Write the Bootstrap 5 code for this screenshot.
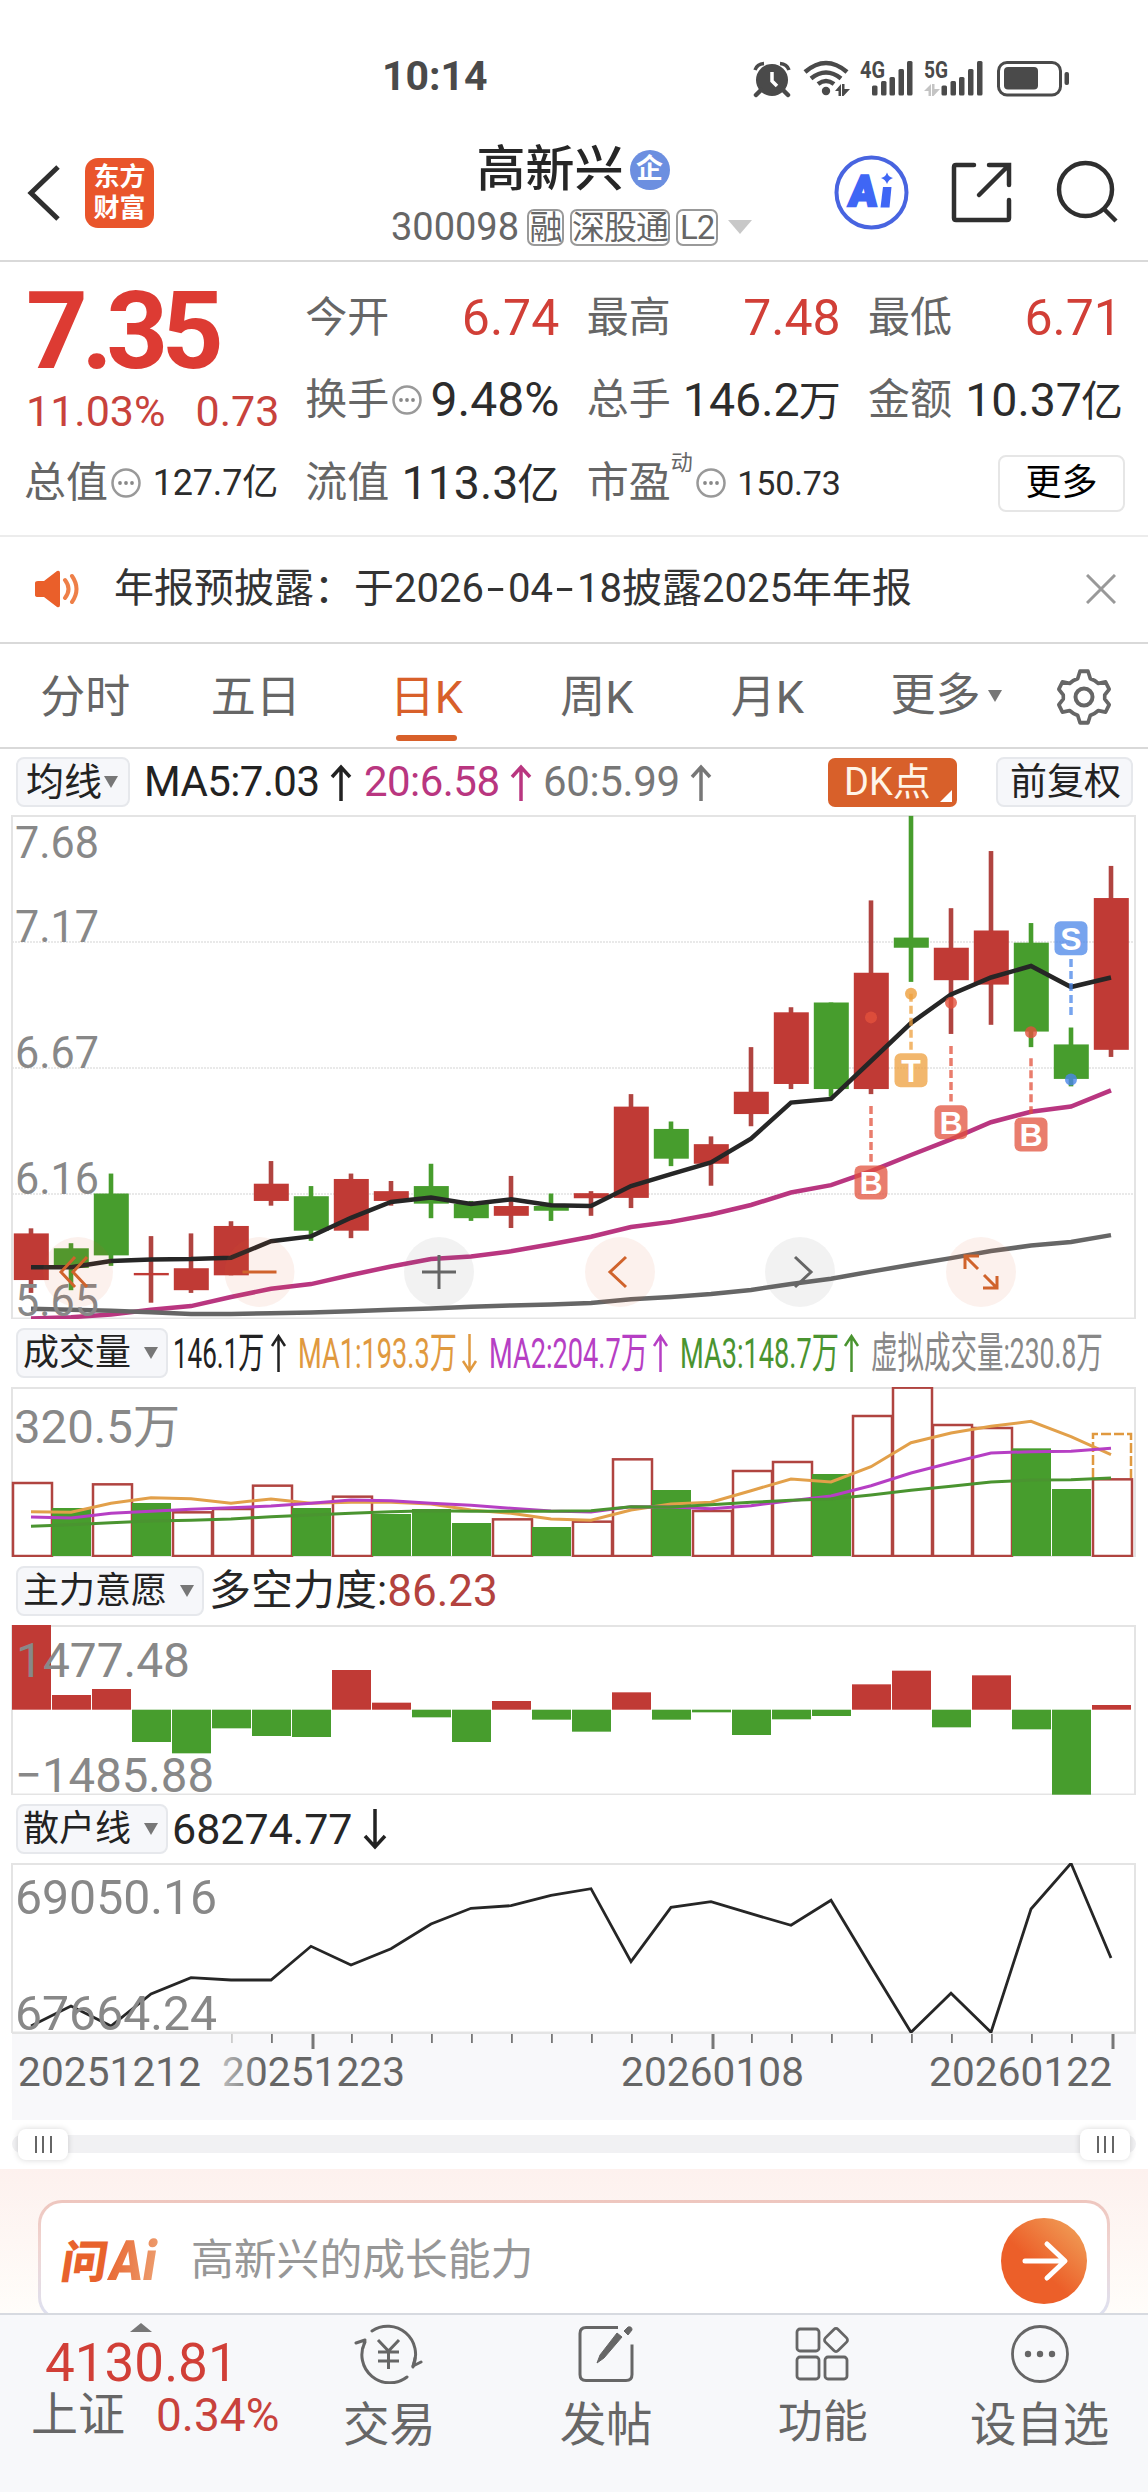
<!DOCTYPE html>
<html lang="zh-CN">
<head>
<meta charset="utf-8">
<meta name="viewport" content="width=device-width, initial-scale=1">
<title>高新兴 300098</title>
<link href="https://cdn.jsdelivr.net/npm/bootstrap@5.3.0/dist/css/bootstrap.min.css" rel="stylesheet">
<style>
:root{--up:#c03a35;--rise:#d13f37;--dn:#479d2d;--ink:#262626;--mid:#666;--org:#d8602a}
body{font-family:Roboto,"Noto Sans CJK SC",sans-serif;color:var(--ink);background:#fff;width:1148px;line-height:1;overflow-x:hidden}
svg{display:block;flex:none}
svg text{font-family:Roboto,"Noto Sans CJK SC",sans-serif}
.nw{white-space:nowrap}
.statusbar{height:98px;padding:55px 81px 0 382px;color:#4a4a4a}
.clock{font-size:41px;font-weight:700;line-height:43px}
.topbar{height:164px;border-bottom:2px solid #d9d9d9;padding:0 29px 0 27px}
.applogo{width:69px;height:70px;border-radius:13px;background:#e9552b;color:#fff;font-size:26px;font-weight:700;line-height:31px;margin-left:25px;padding-top:4px;text-align:center}
.stockname{font-size:49px;line-height:50px;font-weight:500}
.corp{width:40px;height:40px;border-radius:50%;background:#6c8fe0;color:#fff;font-size:27px;font-weight:700;line-height:39px;text-align:center;margin-left:6px}
.code{font-size:38px;color:var(--mid)}
.chip{border:2px solid #999;border-radius:7px;font-size:33px;height:37px;line-height:34px;color:var(--mid);letter-spacing:-1px;text-align:center;white-space:nowrap;display:flex;justify-content:center}
.quotes{display:grid;grid-template-columns:repeat(4,254px);grid-template-rows:82px 82px 84px;justify-content:space-between;padding:15px 26px 10px 24px;height:275px;border-bottom:2px solid #ececec}
.quotes>div{white-space:nowrap}
.pricebox{grid-row:1/3;padding:9px 0 0 2px}
.bigprice{font-size:108px;font-weight:700;color:#dd3b33;letter-spacing:-6.5px;line-height:90px}
.qk{font-size:42px;color:var(--mid)}
.qv{font-size:46.5px;color:#2c2c2c}
.qv.px{font-size:50px;color:var(--rise)}
.qv.sm{font-size:34px;letter-spacing:-.2px}
.qv .cj{font-size:42px;margin-left:-1px}
.dyn{font-size:22px;color:var(--mid);align-self:flex-start;margin-top:11px}
.morebtn{width:127px;height:57px;border:2px solid #e6e6e6;border-radius:8px;font-size:36px;line-height:53px;text-align:center;background:#fff}
.notice{height:107px;border-bottom:2px solid #d9d9d9;padding:0 32px 2px 34px;font-size:40px;color:#333}
.hy{display:inline-block;transform:scaleX(1.6);margin:0 6.500px}
.tabsrow{height:105px;border-bottom:2px solid #d9d9d9;font-size:45px;color:var(--mid)}
.tabsrow .tabitem{width:170.5px;text-align:center;height:100%;padding-top:31px}
.tabsrow .on{color:var(--org)}
.tabsrow .on::after{content:"";display:block;width:61px;height:6px;border-radius:3px;background:var(--org);margin:15px auto 0}
.indrow{height:68px;padding-left:16px}
.pill{background:#f6f7fa;border:2px solid #e6e8ec;border-radius:8px;height:50px;font-size:36px;color:#222;padding-left:5px;white-space:nowrap;display:flex;align-items:center;flex:none}
.tri{width:0;height:0;border:7.5px solid transparent;border-bottom:0;border-top:12px solid #777}
.dk{width:129px;height:49px;border-radius:7px;background:var(--org);color:#fff5e8;font-size:38px;padding-left:16px;line-height:48px;position:relative}
.dk::after{content:"";position:absolute;right:5px;bottom:5px;border-left:12px solid transparent;border-bottom:12px solid #fff}
.axis{height:87px}
.sliderrow{height:49px;padding:9px 12px 0}
.track{height:18px;border-radius:9px;background:#f1f1f3;margin-top:6px;padding:0 6px}
.grip{width:50px;height:31px;border-radius:8px;background:#fff;box-shadow:0 0 6px rgba(0,0,0,.16);gap:5.5px}
.grip i{width:2px;height:17px;background:#666}
.aiwrap{height:144px;background:linear-gradient(#fdf1ee,#fffdfa);padding:31px 38px 0;overflow:hidden}
.aibox{height:121px;border-radius:24px;border:3px solid transparent;background:linear-gradient(#fff,#fff) padding-box,linear-gradient(#eec6be,#f0d5d2 40%,#dfe0ee 90%) border-box;padding:0 19px 0 19px}
.aibox .ask{font-size:42.8px;color:#979797;margin-left:27px}
.botnav{height:179px;background:#f7f8fa;border-top:2px solid #d7dae0;font-size:46.5px;color:var(--mid)}
.idxcell{width:281px;position:relative}
.navcell{width:216.75px;padding-top:9px}
.idxval{font-size:53px;color:var(--rise);margin-left:45px;line-height:50px;padding-top:6px}
</style>
</head>
<body>
<header class="statusbar d-flex justify-content-between align-items-start">
  <div class="clock">10:14</div>
  <svg width="330" height="48" viewBox="750 54 330 48" fill="#4a4a4a" style="margin-right:-13px">
    <circle cx="772" cy="79" r="16"/><path d="M761 89l-5 5M783 89l5 5" stroke="#4a4a4a" stroke-width="4.500" stroke-linecap="round"/>
    <path d="M755 69q2-6 9-6.500M789 69q-2-6-9-6.500" stroke="#4a4a4a" stroke-width="3.500" fill="none"/><path d="M772 71v9l5 5" stroke="#fff" stroke-width="3.500" fill="none"/>
    <g stroke="#4a4a4a" stroke-width="4.500" fill="none"><path d="M805 71q21-18 42 0M811 77.500q15-12 30 0M818 83q8-6 16 0"/></g>
    <circle cx="826" cy="90" r="4.200"/><path d="M835 90l6-7v12h-2.500v-5zM842 83h2.500v5h5.500l-6.500 7H842z"/>
    <text x="860" y="76.500" font-size="23" font-weight="700" textLength="25" lengthAdjust="spacingAndGlyphs">4G</text>
    <text x="924" y="76.500" font-size="23" font-weight="700" textLength="24" lengthAdjust="spacingAndGlyphs">5G</text>
    <g><rect x="872" y="84.500" width="5.500" height="10" rx="1.500"/><rect x="881" y="80" width="5.500" height="14.500" rx="1.500"/><rect x="889.500" y="76" width="5.500" height="18.500" rx="1.500"/><rect x="898.500" y="68" width="5.500" height="26.500" rx="1.500"/><rect x="907" y="60" width="5.500" height="34.500" rx="1.500"/></g>
    <g><rect x="941.500" y="84.500" width="5.500" height="10" rx="1.500"/><rect x="950.500" y="80" width="5.500" height="14.500" rx="1.500"/><rect x="959" y="76" width="5.500" height="18.500" rx="1.500"/><rect x="968" y="68" width="5.500" height="26.500" rx="1.500"/><rect x="977" y="60" width="5.500" height="34.500" rx="1.500"/></g>
    <path fill="#c4c4c4" d="M924 90l7-7v12h-2.500v-5zM932 83h2.500v5h5.500l-6.500 7H932z"/>
    <rect x="998.500" y="61.500" width="62" height="32.500" rx="8.500" fill="none" stroke="#4a4a4a" stroke-width="3"/><rect x="1004" y="66" width="34" height="22.500" rx="4"/><rect x="1064.500" y="71" width="4.500" height="13" rx="2"/>
  </svg>
</header>

<nav class="topbar d-flex align-items-start justify-content-between">
  <div class="d-flex align-items-start" style="padding-top:60px">
    <svg width="33" height="70" viewBox="0 0 33 70"><path d="M31 9L4 35l27 26" fill="none" stroke="#2f2f2f" stroke-width="5"/></svg>
    <div class="applogo">东方<br>财富</div>
  </div>
  <div class="d-flex flex-column align-items-center" style="padding-top:47px;margin-left:160px">
    <div class="d-flex align-items-center" style="margin-left:3px"><span class="stockname">高新兴</span><span class="corp">企</span></div>
    <div class="d-flex align-items-center" style="margin-top:13px"><span class="code">300098</span>
      <span class="chip" style="width:37px;margin-left:8px">融</span><span class="chip" style="width:100px;margin-left:6px">深股通</span><span class="chip" style="width:42px;margin-left:6px">L2</span>
      <svg width="24" height="14" viewBox="0 0 24 14" style="margin-left:10px"><path d="M0 0h24L12 14z" fill="#c8c8c8"/></svg>
    </div>
  </div>
  <svg width="290" height="80" viewBox="829 152 290 80" style="margin-top:54px">
    <circle cx="871.500" cy="192.500" r="35" fill="none" stroke="#4864e0" stroke-width="4"/>
    <text transform="translate(848 206) skewX(-5)" font-size="43" font-weight="900" fill="#3f66f5" stroke="#3f66f5" stroke-width="2.500" textLength="28" lengthAdjust="spacingAndGlyphs">A</text>
    <path d="M883 187h8.500l-2 20.500h-9z" fill="#3f66f5"/><path d="M887 172.500q1.500 4.500 6 5.500-4.500 1.500-6 6-1.500-4.500-6-6 4.500-1 6-5.500z" fill="#3f66f5"/>
    <path d="M974 165H956q-2 0-2 2v51q0 2 2 2h51q2 0 2-2v-18M989 165h20v20M1008 166l-29 29" fill="none" stroke="#2f2f2f" stroke-width="4.500" stroke-linecap="round"/>
    <circle cx="1085.500" cy="189.500" r="26.500" fill="none" stroke="#2f2f2f" stroke-width="4.500"/><path d="M1104 209l12 12" stroke="#2f2f2f" stroke-width="4.500"/>
  </svg>
</nav>

<section class="quotes">
  <div class="pricebox"><div class="bigprice">7.35</div>
    <div class="d-flex" style="font-size:43px;color:#c8423c;margin-top:14px"><span>11.03%</span><span style="margin-left:30px">0.73</span></div></div>
  <div class="d-flex align-items-center justify-content-between"><span class="qk">今开</span><span class="qv px">6.74</span></div>
  <div class="d-flex align-items-center justify-content-between"><span class="qk">最高</span><span class="qv px">7.48</span></div>
  <div class="d-flex align-items-center justify-content-between"><span class="qk">最低</span><span class="qv px">6.71</span></div>
  <div class="d-flex align-items-center"><span class="qk">换手</span><svg width="30" height="30" viewBox="0 0 30 30" style="margin-left:3px"><use href="#dots"/></svg><span class="qv ms-auto" style="font-size:48px">9.48%</span></div>
  <div class="d-flex align-items-center justify-content-between"><span class="qk">总手</span><span class="qv">146.2<span class="cj">万</span></span></div>
  <div class="d-flex align-items-center justify-content-between"><span class="qk">金额</span><span class="qv" style="margin-right:-1px">10.37<span class="cj">亿</span></span></div>
  <div class="d-flex align-items-center"><span class="qk">总值</span><svg width="30" height="30" viewBox="0 0 30 30" style="margin-left:3px"><use href="#dots"/></svg><span class="qv sm ms-auto" style="font-size:36px">127.7<span style="font-size:36px">亿</span></span></div>
  <div class="d-flex align-items-center justify-content-between"><span class="qk">流值</span><span class="qv">113.3<span class="cj">亿</span></span></div>
  <div class="d-flex align-items-center"><span class="qk">市盈</span><span class="dyn">动</span><svg width="30" height="30" viewBox="0 0 30 30" style="margin-left:3px"><use href="#dots"/></svg><span class="qv sm ms-auto">150.73</span></div>
  <div class="d-flex align-items-center justify-content-end"><button class="morebtn p-0" style="margin-right:-3px">更多</button></div>
</section>
<svg width="0" height="0" class="position-absolute"><defs><g id="dots"><circle cx="15" cy="15" r="13.500" fill="none" stroke="#999" stroke-width="2.500"/><circle cx="9" cy="15" r="1.900" fill="#888"/><circle cx="15" cy="15" r="1.900" fill="#888"/><circle cx="21" cy="15" r="1.900" fill="#888"/></g></defs></svg>

<section class="notice d-flex align-items-center">
  <svg width="46" height="38" viewBox="0 0 46 38"><path d="M1 13q0-2 3-2h6L23 1q3-1 3 2v32q0 3-3 2L10 27H4q-3 0-3-2z" fill="#ea5f2a"/><path d="M31 10q7 9 0 18M38 6q9 13 0 26" fill="none" stroke="#ee7f48" stroke-width="4" stroke-linecap="round"/></svg>
  <span class="nw" style="margin-left:34px">年报预披露：于2026<span class="hy">-</span>04<span class="hy">-</span>18披露2025年年报</span>
  <svg class="ms-auto" width="30" height="30" viewBox="0 0 30 30"><path d="M1 1l28 28M29 1L1 29" stroke="#999" stroke-width="3"/></svg>
</section>

<nav class="tabsrow d-flex">
  <div class="tabitem">分时</div><div class="tabitem">五日</div><div class="tabitem on">日K</div><div class="tabitem">周K</div><div class="tabitem">月K</div>
  <div class="d-flex align-items-center nw" style="margin-left:38px">更多<span class="tri" style="margin-left:7px"></span></div>
  <svg width="56" height="58" viewBox="-28 -29 56 58" style="margin:24px 0 0 54px" fill="none" stroke="#666" stroke-width="4"><path stroke-linejoin="round" d="M-4.500-26.500h9l2.500 7.500q5 1.500 9 5l8-1.500 4 7.500-5 6v4l5 6-4 7.500-8-1.500q-4 3.500-9 5L4.500 26.500h-9L-7 19q-5-1.500-9-5l-8 1.500-4-7.500 5-6v-4l-5-6 4-7.500 8 1.500q4-3.500 9-5z" transform="scale(.9 .97)"/><circle r="8.500"/></svg>
</nav>

<div class="indrow d-flex align-items-center" style="height:66px">
  <div class="pill" style="width:114px;font-size:38px;padding-left:8px">均线<span class="tri" style="margin-left:2px"></span></div>
  <svg width="580" height="50" viewBox="140 757 580 50" style="margin-left:10px" font-size="42">
    <text x="144" y="796" fill="#222" textLength="176">MA5:7.03</text><text x="364" y="796" fill="#b93680" textLength="136">20:6.58</text><text x="543" y="796" fill="#777" textLength="137">60:5.99</text>
    <g fill="none" stroke-width="3.500"><path stroke="#222" d="M341 801v-34M332 777l9-10 9 10"/><path stroke="#b93680" d="M521 801v-34M512 777l9-10 9 10"/><path stroke="#777" d="M701 801v-34M692 777l9-10 9 10"/></g>
  </svg>
  <div class="dk nw" style="margin-left:108px">DK点</div>
  <div class="pill" style="width:137px;margin-left:39px;padding-left:12px;font-size:37px">前复权</div>
</div>
<svg id="kline" width="1148" height="504" viewBox="0 815 1148 504"></svg>

<div class="indrow d-flex align-items-center">
  <div class="pill" style="width:152px">成交量<span class="tri" style="margin-left:13px"></span></div>
  <svg width="940" height="50" viewBox="172 1328 940 50" font-size="43" style="margin-left:4px">
    <text transform="translate(173 1368) scale(.605 1)" fill="#222">146.1万</text>
    <text transform="translate(298 1368) scale(.632 1)" fill="#e0993f">MA1:193.3万</text>
    <text transform="translate(489 1368) scale(.632 1)" fill="#b63fc4">MA2:204.7万</text>
    <text transform="translate(680 1368) scale(.632 1)" fill="#4a9430">MA3:148.7万</text>
    <text transform="translate(871 1368) scale(.616 1)" fill="#888">虚拟成交量:230.8万</text>
    <g fill="none" stroke-width="2.500"><path stroke="#222" d="M278.500 1372v-36M272 1346l6.500-10 6.500 10"/><path stroke="#e0993f" d="M469.500 1334v36M463 1361l6.500 10 6.500-10"/><path stroke="#b63fc4" d="M660.500 1372v-36M654 1346l6.500-10 6.500 10"/><path stroke="#4a9430" d="M851.500 1372v-36M845 1346l6.500-10 6.500 10"/></g>
  </svg>
</div>
<svg id="vol" width="1148" height="170" viewBox="0 1387 1148 170"></svg>

<div class="indrow d-flex align-items-center">
  <div class="pill" style="width:188px">主力意愿<span class="tri" style="margin-left:13px"></span></div>
  <span class="nw" style="font-size:42px;margin-left:5px">多空力度:</span><span style="font-size:44px;color:#b3423e">86.23</span>
</div>
<svg id="force" width="1148" height="170" viewBox="0 1625 1148 170"></svg>

<div class="indrow d-flex align-items-center">
  <div class="pill" style="width:152px">散户线<span class="tri" style="margin-left:13px"></span></div>
  <span style="font-size:43px;margin-left:4px">68274.77</span>
  <svg width="26" height="44" viewBox="0 0 26 44" style="margin-left:9px"><path d="M13 2v38M3 29l10 11 10-11" fill="none" stroke="#222" stroke-width="3.500"/></svg>
</div>
<svg id="retail" width="1148" height="170" viewBox="0 1863 1148 170"></svg>
<svg id="axis" class="axis" width="1148" height="87" viewBox="0 2033 1148 87"></svg>

<div class="sliderrow">
  <div class="track d-flex justify-content-between align-items-center">
    <div class="grip d-flex justify-content-center align-items-center"><i></i><i></i><i></i></div>
    <div class="grip d-flex justify-content-center align-items-center"><i></i><i></i><i></i></div>
  </div>
</div>

<section class="aiwrap">
  <div class="aibox d-flex align-items-center">
    <svg width="104" height="50" viewBox="60 2234 104 50"><defs><linearGradient id="lg" gradientUnits="userSpaceOnUse" x1="0" y1="0" x2="100" y2="0"><stop offset=".4" stop-color="#e8622c"/><stop offset="1" stop-color="#eda274"/></linearGradient></defs>
      <g transform="translate(60 2278) skewX(-9)" fill="url(#lg)" font-weight="900"><text x="-1" y="-2" font-size="45" textLength="46" lengthAdjust="spacingAndGlyphs">问</text>
      <text x="47" y="0" font-size="56" textLength="47" lengthAdjust="spacingAndGlyphs">Ai</text></g></svg>
    <span class="ask nw">高新兴的成长能力</span>
    <svg class="ms-auto" width="88" height="88" viewBox="0 0 88 88"><defs><linearGradient id="og" x1=".25" y1=".8" x2=".9" y2=".1"><stop offset=".3" stop-color="#ec5f29"/><stop offset="1" stop-color="#f09b55"/></linearGradient></defs><circle cx="44" cy="44" r="43" fill="url(#og)"/><path d="M25 44h39M47 27l18 17-18 17" fill="none" stroke="#fff" stroke-width="5" stroke-linecap="round" stroke-linejoin="round"/></svg>
  </div>
</section>

<nav class="botnav d-flex">
  <div class="idxcell">
    <svg width="22" height="9" viewBox="0 0 22 9" style="margin:8px 0 0 130px"><path d="M0 9L11 0l11 9z" fill="#777"/></svg>
    <div class="idxval">4130.81</div>
    <div class="d-flex align-items-center nw" style="margin:3px 0 0 31px"><span style="font-size:47px">上证</span><span style="font-size:46px;color:#c8423c;margin-left:31px">0.34%</span></div>
  </div>
  <div class="navcell d-flex flex-column align-items-center">
    <svg width="70" height="60" viewBox="355 2324 70 60" fill="none" stroke="#666" stroke-width="3"><path d="M373 2331a28 28 0 0 1 41 35l8-4M408 2377a28 28 0 0 1-42-35M357 2343l9-3-2 8" stroke-linecap="round" stroke-linejoin="round"/><path d="M414 2367l2-9" stroke-linecap="round"/><path d="M379 2340l10.500 11 10.500-11M379 2352h21M379 2361h21M389.500 2351v18"/></svg>
    <span style="margin-top:18px">交易</span></div>
  <div class="navcell d-flex flex-column align-items-center">
    <svg width="60" height="60" viewBox="576 2324 60 60" fill="none" stroke="#666" stroke-width="3"><path d="M618 2327.500h-32q-6 0-6 6v41q0 6 6 6h40q6 0 6-6v-30"/><path d="M622 2337l-18 21-7 5 3-8 17-22zM624 2331l4-4q4-1 4 3l-4 5z" fill="#666" stroke-width="1"/></svg>
    <span style="margin-top:18px">发帖</span></div>
  <div class="navcell d-flex flex-column align-items-center">
    <svg width="60" height="60" viewBox="793 2324 60 60" fill="none" stroke="#666" stroke-width="2.800"><rect x="797" y="2329" width="22" height="22" rx="3"/><rect x="797" y="2357" width="22" height="22" rx="3"/><rect x="825" y="2357" width="22" height="22" rx="3"/><rect x="827" y="2331" width="18" height="18" rx="3" transform="rotate(45 836 2340)"/></svg>
    <span style="margin-top:16px;font-size:45px">功能</span></div>
  <div class="navcell d-flex flex-column align-items-center">
    <svg width="60" height="60" viewBox="-30 -30 60 60"><circle r="27.500" fill="none" stroke="#666" stroke-width="2.800"/><g fill="#666"><circle cx="-12" r="3.200"/><circle r="3.200"/><circle cx="12" r="3.200"/></g></svg>
    <span style="margin-top:18px">设自选</span></div>
</nav>

<script src="https://cdn.jsdelivr.net/npm/bootstrap@5.3.0/dist/js/bootstrap.bundle.min.js"></script>
<script>
const R='#c03a35',G='#479d2d';
const cx=i=>31+40*i;
const rect=(x,y,w,h,f,e='')=>`<rect x="${x}" y="${y}" width="${w}" height="${h}" fill="${f}" ${e}/>`;
const line=(v,f,c,w)=>`<polyline fill="none" stroke="${c}" stroke-width="${w}" points="${v.map((y,i)=>cx(i)+','+f(y).toFixed(1)).join(' ')}"/>`;
const frame=(y,h)=>rect(12,y,1123,h,'none','stroke="#e4e4e4" stroke-width="2"');
const label=(t,x,y,w,s)=>`<text x="${x}" y="${y}" font-size="${s}" fill="#888" textLength="${w}" lengthAdjust="spacingAndGlyphs">${t}</text>`;

/* daily candles: [colour, body top, body bottom, high, low] */
const K=[['R',1282,1420,1267,1458],['G',1326,1384,1311,1450],['G',1164,1347,1105,1378],['R',1399,1406,1290,1487],['R',1385,1450,1282,1458],['R',1260,1406,1246,1406],['R',1135,1186,1068,1200],['G',1172,1274,1142,1304],['R',1121,1274,1105,1296],['R',1157,1186,1127,1200],['G',1142,1194,1076,1237],['G',1194,1237,1186,1245],['R',1201,1230,1112,1266],['G',1201,1215,1164,1245],['R',1163,1178,1157,1230],['R',907,1177,870,1207],['G',973,1061,951,1083],['R',1018,1076,995,1141],['R',863,929,731,965],['R',628,840,613,855],['G',599,855,599,878],['R',511,855,297,870],['G',407,437,47,538],['R',437,533,320,692],['R',386,546,151,665],['G',422,685,364,731],['G',723,825,673,847],['R',290,739,195,760]];
const ky=v=>800+v/2.958;
let s=frame(816,502.5);
[942,1068,1194].forEach(y=>s+=`<path d="M12 ${y}H1135" stroke="#e2e2e2" stroke-width="1.500" stroke-dasharray="2 1"/>`);
K.forEach((k,i)=>{const c=k[0]=='R'?R:G;s+=rect(cx(i)-2.3,ky(k[3]),4.6,(k[4]-k[3])/2.958,k[0]=='R'?'#b04440':c)+rect(cx(i)-17.2,ky(k[1]),35,(k[2]-k[1])/2.958,c)});
s+=line([1382,1382,1364,1359,1358,1354,1305,1291,1236,1189,1176,1195,1181,1199,1201,1142,1107,1072,1002,895,884,772,660,575,525,491,553,525],ky,'#262626',4.5);
s+=line([1534,1530,1522,1508,1497,1470,1446,1432,1405,1380,1358,1350,1335,1314,1292,1263,1248,1226,1198,1161,1139,1098,1050,1004,953,922,907,859],ky,'#b93680',4.5);
s+=line([1505,1508,1511,1515,1520,1520,1518,1516,1512,1508,1504,1499,1495,1492,1488,1477,1470,1461,1449,1432,1416,1395,1375,1355,1334,1318,1307,1287],ky,'#666',4.5);
[['B',21,1081,905,1070,643,'#e2513c'],['T',22,749,573,740,573,'#ee9f3c'],['B',23,903,728,892,600,'#e2513c'],['B',25,939,764,928,687,'#e2513c'],['S',26,359,470,636,827,'#4a86e8']].forEach(m=>{
 const x=cx(m[1]),y=ky(m[2]);
 s+=`<path d="M${x} ${ky(m[3])}V${ky(m[4])}" stroke="${m[6]}" stroke-opacity=".75" stroke-width="3.500" stroke-dasharray="8 4"/><circle cx="${x}" cy="${ky(m[5])}" r="6" fill="${m[6]}" fill-opacity=".8"/>`+rect(x-16.5,y,33,34,m[6],'rx="6" fill-opacity=".75"')+`<text x="${x}" y="${y+28.5}" text-anchor="middle" font-size="32" font-weight="700" fill="#fff" style="font-family:'Liberation Sans',sans-serif">${m[0]}</text>`});
[[857.5,'7.68'],[941.5,'7.17'],[1068,'6.67'],[1194,'6.16'],[1316,'5.65']].forEach(t=>s+=label(t[1],15,t[0],84,44));
const O='#d0632c',Y='#666';
[[78,O,'M-3-15l-14 15 14 15M9-15L-5 0l14 15'],[259.5,O,'M-17 0h34'],[439,Y,'M-17 0h34M0-17v34'],[620,O,'M6-15L-10 0l16 15'],[800,Y,'M-5-15L11 0l-16 15'],[981,O,'M-16-3v-13h14M-15-15l12 12M16 4v12H2M15 15L3 3']].forEach(b=>s+=`<g transform="translate(${b[0]} 1272)"><circle r="35" fill="${b[1]==O?'#d8602a':'#666'}" fill-opacity=".085"/><path d="${b[2]}" fill="none" stroke="${b[1]}" stroke-width="3"/></g>`);
kline.innerHTML=s;

/* volume */
const vy=v=>1310+v/3;
const V=['R519','G597','R523','G582','R607','R597','R527','G597','R560','G615','G600','G642','R628','G654','R635','R448','G543','R603','R483','R456','G495','R318','R233','R345','R354','G418','G540','R508'];
s=frame(1388,168.500);
s+=`<path d="M1093 1478V1434H1131V1478" fill="none" stroke="#e0993f" stroke-width="2.500" stroke-dasharray="10 3"/>`;
V.forEach((v,i)=>{const y=vy(+v.slice(1)),x=12+40*i;s+=v[0]=='G'?rect(x,y-1,39,1557-y,G):rect(x+1,y,39,1556-y,'#fff','stroke="#b04440" stroke-width="2.500"')});
s+=line([605,607,580,563,566,580,567,580,577,577,582,600,610,627,631,600,582,577,542,507,516,470,398,369,349,334,380,434],vy,'#e2a04a',3);
s+=line([621,624,610,604,598,593,588,580,570,572,580,586,595,603,606,590,591,596,587,572,558,527,489,458,429,425,424,415],vy,'#b63fc4',3);
s+=line([649,644,638,633,631,627,620,615,610,605,602,604,604,604,602,590,591,584,577,571,567,555,541,529,516,510,509,504],vy,'#4a9430',3);
s+=label('320.5万',14,1443,166,47);
vol.innerHTML=s;

/* buying force around the zero line */
const fy=v=>1610+v/3,F=[45,255,237,396,430,355,378,381,180,278,322,396,273,329,365,247,329,307,375,328,318,223,182,352,196,358,554,285];
s=frame(1626,168.500);
F.forEach((v,i)=>{const y=fy(v),z=1709.700;s+=rect(12+40*i,Math.min(y,z),39,Math.abs(y-z),v<299?R:G)});
s+=label('1477.48',16,1676.500,174,48)+label('−1485.88',15,1792,199,48);
force.innerHTML=s;

/* retail holders */
s=frame(1864,168.500)+line([528,468,528,432,383,390,390,289,345,296,222,175,167,136,116,335,172,155,191,226,151,350,547,430,547,177,40,324],v=>1850+v/3,'#262626',2.8)+label('69050.16',15,1914,202,48)+label('67664.24',15,2030,202,48);
retail.innerHTML=s;

/* date axis */
s='<defs><linearGradient id="fd"><stop offset="0" stop-color="#bbb"/><stop offset=".22" stop-color="#666"/></linearGradient></defs>'+rect(12,2033,1124,87,'#f8f8fa')+rect(12,2032,1124,2,'#e4e4e4');
for(let i=5;i<28;i++){const M=i==7||i==17||i==27;s+=rect(cx(i)-(M?0:.5)+.5,2034,M?3:1.8,M?15:9,i==5?'#ccc':'#777')}
[['20251212',18,'#666'],['20251223',222,'url(#fd)'],['20260108',621,'#666'],['20260122',929,'#666']].forEach(t=>s+=`<text x="${t[1]}" y="2086" font-size="40.500" fill="${t[2]}" textLength="183">${t[0]}</text>`);
axis.innerHTML=s;
</script>
</body>
</html>
